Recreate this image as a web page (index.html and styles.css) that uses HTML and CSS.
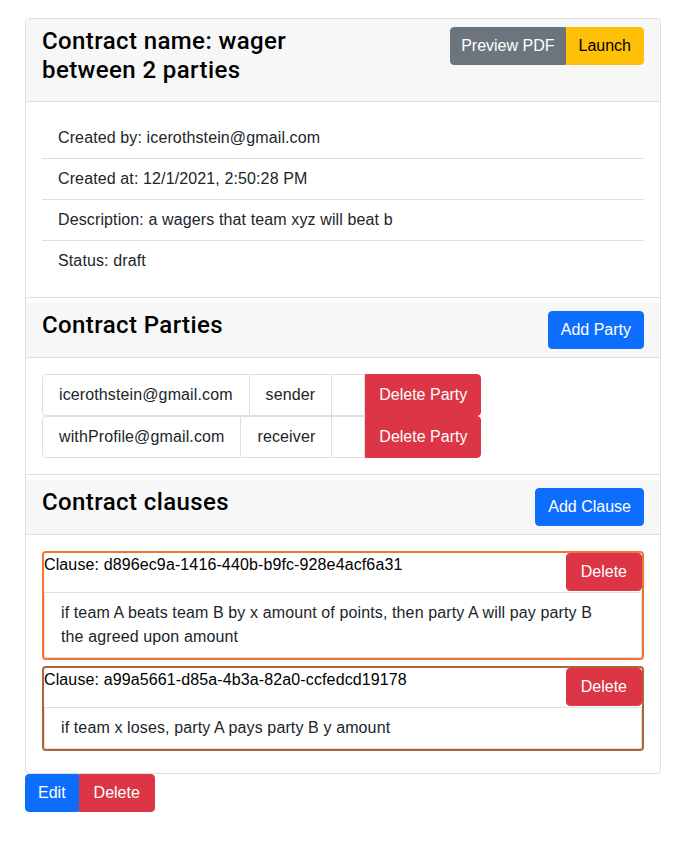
FILE: index.html
```html
<!DOCTYPE html>
<html>
<head>
<meta charset="utf-8">
<link rel="stylesheet" href="styles.css">
</head>
<body>
<div class="page">
  <div class="card">
    <div class="card-header">
      <h4 class="title title-main">Contract name: wager between 2 parties</h4>
      <div class="btn-group">
        <button class="btn btn-secondary">Preview PDF</button><button class="btn btn-warning">Launch</button>
      </div>
    </div>
    <div class="card-body">
      <ul class="list-flush">
        <li class="list-item">Created by: icerothstein@gmail.com</li>
        <li class="list-item">Created at: 12/1/2021, 2:50:28 PM</li>
        <li class="list-item">Description: a wagers that team xyz will beat b</li>
        <li class="list-item">Status: draft</li>
      </ul>
    </div>
    <div class="section-head">
      <h4 class="title">Contract Parties</h4>
      <button class="btn btn-primary">Add Party</button>
    </div>
    <div class="card-body">
      <div class="party-row">
        <ul class="list-horizontal">
          <li class="h-item">icerothstein@gmail.com</li>
          <li class="h-item">sender</li>
          <li class="h-item"></li>
        </ul>
        <button class="btn btn-danger btn-party">Delete Party</button>
      </div>
      <div class="party-row">
        <ul class="list-horizontal">
          <li class="h-item">withProfile@gmail.com</li>
          <li class="h-item">receiver</li>
          <li class="h-item"></li>
        </ul>
        <button class="btn btn-danger btn-party">Delete Party</button>
      </div>
    </div>
    <div class="section-head">
      <h4 class="title">Contract clauses</h4>
      <button class="btn btn-primary">Add Clause</button>
    </div>
    <div class="card-body body-last">
      <div class="clause clause-orange">
        <div class="clause-head">
          <span class="clause-id">Clause: d896ec9a-1416-440b-b9fc-928e4acf6a31</span>
          <button class="btn btn-danger btn-del">Delete</button>
        </div>
        <div class="clause-text">if team A beats team B by x amount of points, then party A will pay party B the agreed upon amount</div>
      </div>
      <div class="clause clause-brown">
        <div class="clause-head">
          <span class="clause-id">Clause: a99a5661-d85a-4b3a-82a0-ccfedcd19178</span>
          <button class="btn btn-danger btn-del">Delete</button>
        </div>
        <div class="clause-text">if team x loses, party A pays party B y amount</div>
      </div>
    </div>
  </div>
  <div class="btn-group">
    <button class="btn btn-primary">Edit</button><button class="btn btn-danger btn-del">Delete</button>
  </div>
</div>
</body>
</html>
```

FILE: styles.css
```css
* { box-sizing: border-box; }
html, body { margin: 0; padding: 0; }
body {
  font-family: "Liberation Sans", Arial, sans-serif;
  font-size: 16px;
  line-height: 1.5;
  letter-spacing: 0.12px;
  color: #212529;
  background: #fff;
}
.page {
  padding: 18px 0 0 25px;
  width: 661px;
}
.card {
  border: 1px solid #dfdfdf;
  border-radius: 4px;
  background: #fff;
}
.card-header {
  display: flex;
  justify-content: space-between;
  align-items: flex-start;
  padding: 8px 16px;
  background: #f7f7f7;
  border-bottom: 1px solid #dfdfdf;
  border-radius: 3px 3px 0 0;
}
.title {
  margin: 0 0 8px 0;
  font-family: Roboto, "Liberation Sans", sans-serif;
  font-weight: 500;
  font-size: 24px;
  line-height: 1.2;
  letter-spacing: 0.4px;
  color: #000;
}
.title-main {
  max-width: 301px;
}
.card-body {
  padding: 16px;
  border-bottom: 1px solid #dfdfdf;
}
.body-last { border-bottom: none; }
.list-flush {
  list-style: none;
  margin: 0;
  padding: 0;
}
.list-item {
  padding: 8px 16px;
  border-bottom: 1px solid #dfdfdf;
}
.list-item:last-child { border-bottom: none; }
.section-head {
  margin-top: 5px;
  display: flex;
  justify-content: space-between;
  align-items: flex-start;
  padding: 8px 16px;
  background: #f7f7f7;
  border-bottom: 1px solid #dfdfdf;
}
.btn {
  font-family: inherit;
  font-size: 16px;
  line-height: 24px;
  letter-spacing: 0;
  padding: 6px 12px;
  border: 1px solid transparent;
  border-radius: 4px;
  color: #fff;
  cursor: pointer;
  margin: 0;
}
.btn-del { padding: 6px 14px; }
.btn-secondary { background: #6c757d; border-color: #6c757d; padding: 6px 10px; }
.btn-warning { background: #ffc107; border-color: #ffc107; color: #000; }
.btn-primary { background: #0d6efd; border-color: #0d6efd; }
.btn-danger { background: #dc3545; border-color: #dc3545; }
.btn-group { display: flex; }
.btn-group .btn:first-child { border-top-right-radius: 0; border-bottom-right-radius: 0; }
.btn-group .btn:last-child { border-top-left-radius: 0; border-bottom-left-radius: 0; }
.party-row {
  display: flex;
  align-items: stretch;
}
.list-horizontal {
  display: flex;
  list-style: none;
  margin: 0;
  padding: 0;
}
.h-item {
  padding: 8px 16px;
  border: 1px solid #dfdfdf;
  border-left-width: 0;
  min-height: 42px;
}
.h-item:first-child {
  border-left-width: 1px;
  border-radius: 4px 0 0 4px;
}
.btn-party {
  padding: 6px 13px;
  border-top-left-radius: 0;
  border-bottom-left-radius: 0;
}
.clause {
  border: 2px solid;
  border-radius: 4px;
  margin-bottom: 6px;
}
.clause-orange { border-color: #f07432; }
.clause-brown { border-color: #b0643c; }
.clause-head {
  display: flex;
  justify-content: space-between;
  align-items: flex-start;
  padding-bottom: 1px;
}
.clause-id { color: #000; }
.clause-text {
  border: 1px solid #dfdfdf;
  border-radius: 0 0 3px 3px;
  padding: 8px 30px 8px 16px;
}
```
